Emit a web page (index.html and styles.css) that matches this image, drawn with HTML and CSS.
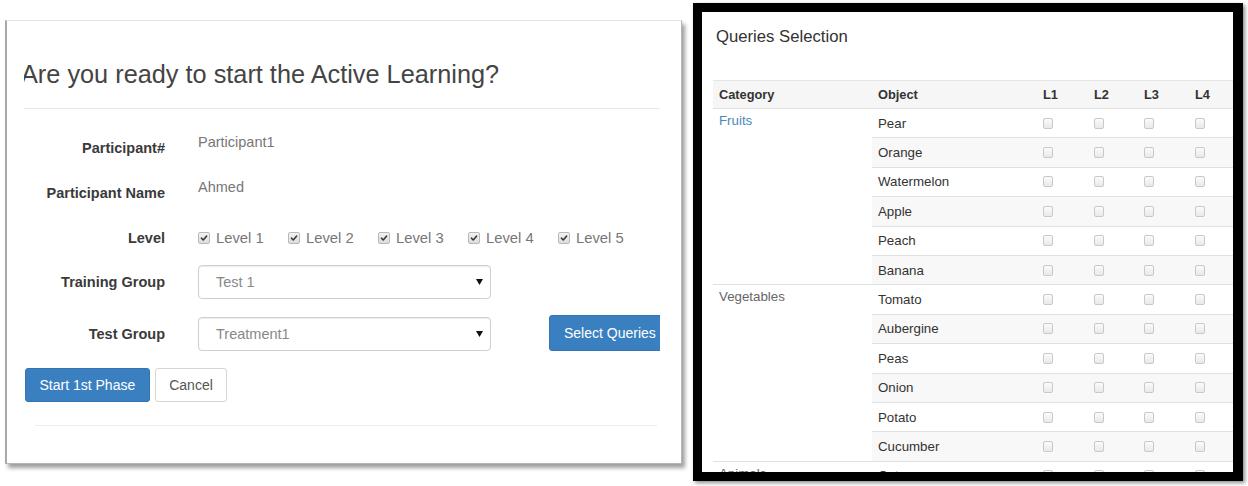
FILE: index.html
```html
<!DOCTYPE html>
<html lang="en">
<head>
<meta charset="utf-8">
<title>Active Learning</title>
<link rel="stylesheet" href="styles.css">
</head>
<body>
<div class="page">
  <section class="modal">
    <div class="modal-clip">
      <h1 class="title">Are you ready to start the Active Learning?</h1>
      <div class="rule"></div>
      <div class="form">
        <div class="row row-1">
          <div class="lbl">Participant#</div>
          <div class="static">Participant1</div>
        </div>
        <div class="row row-2">
          <div class="lbl">Participant Name</div>
          <div class="static">Ahmed</div>
        </div>
        <div class="row row-3">
          <div class="lbl">Level</div>
          <div class="levels">
            <span class="lvl"><span class="chk"><svg viewBox="0 0 12 12" width="12" height="12"><path d="M3 6.2 L5.1 8.4 L9.2 3.6" fill="none" stroke="#333" stroke-width="1.8" stroke-linecap="round" stroke-linejoin="round"/></svg></span>Level 1</span>
            <span class="lvl"><span class="chk"><svg viewBox="0 0 12 12" width="12" height="12"><path d="M3 6.2 L5.1 8.4 L9.2 3.6" fill="none" stroke="#333" stroke-width="1.8" stroke-linecap="round" stroke-linejoin="round"/></svg></span>Level 2</span>
            <span class="lvl"><span class="chk"><svg viewBox="0 0 12 12" width="12" height="12"><path d="M3 6.2 L5.1 8.4 L9.2 3.6" fill="none" stroke="#333" stroke-width="1.8" stroke-linecap="round" stroke-linejoin="round"/></svg></span>Level 3</span>
            <span class="lvl"><span class="chk"><svg viewBox="0 0 12 12" width="12" height="12"><path d="M3 6.2 L5.1 8.4 L9.2 3.6" fill="none" stroke="#333" stroke-width="1.8" stroke-linecap="round" stroke-linejoin="round"/></svg></span>Level 4</span>
            <span class="lvl"><span class="chk"><svg viewBox="0 0 12 12" width="12" height="12"><path d="M3 6.2 L5.1 8.4 L9.2 3.6" fill="none" stroke="#333" stroke-width="1.8" stroke-linecap="round" stroke-linejoin="round"/></svg></span>Level 5</span>
          </div>
        </div>
        <div class="row row-4">
          <div class="lbl">Training Group</div>
          <div class="select"><span>Test 1</span><svg class="caret" viewBox="0 0 7 6" width="7" height="6"><polygon points="0,0 7,0 3.5,6" fill="#111"/></svg></div>
        </div>
        <div class="row row-5">
          <div class="lbl">Test Group</div>
          <div class="select"><span>Treatment1</span><svg class="caret" viewBox="0 0 7 6" width="7" height="6"><polygon points="0,0 7,0 3.5,6" fill="#111"/></svg></div>
          <button class="btn btn-primary btn-queries">Select Queries</button>
        </div>
      </div>
      <div class="actions">
        <button class="btn btn-primary">Start 1st Phase</button>
        <button class="btn btn-default">Cancel</button>
      </div>
      <div class="rule rule-bottom"></div>
    </div>
  </section>

  <section class="queries">
    <div class="queries-inner">
      <h2 class="q-title">Queries Selection</h2>
      <div class="grid">
        <div class="tr head">
          <div class="c">Category</div><div class="c">Object</div><div class="c">L1</div><div class="c">L2</div><div class="c">L3</div><div class="c">L4</div>
        </div>

        <div class="tr">
          <div class="c cat span6"><span class="cat-text fruit">Fruits</span></div>
          <div class="c obj">Pear</div><div class="c"><i class="cb"></i></div><div class="c"><i class="cb"></i></div><div class="c"><i class="cb"></i></div><div class="c"><i class="cb"></i></div>
        </div>
        <div class="tr odd">
          <div class="c obj">Orange</div><div class="c"><i class="cb"></i></div><div class="c"><i class="cb"></i></div><div class="c"><i class="cb"></i></div><div class="c"><i class="cb"></i></div>
        </div>
        <div class="tr">
          <div class="c obj">Watermelon</div><div class="c"><i class="cb"></i></div><div class="c"><i class="cb"></i></div><div class="c"><i class="cb"></i></div><div class="c"><i class="cb"></i></div>
        </div>
        <div class="tr odd">
          <div class="c obj">Apple</div><div class="c"><i class="cb"></i></div><div class="c"><i class="cb"></i></div><div class="c"><i class="cb"></i></div><div class="c"><i class="cb"></i></div>
        </div>
        <div class="tr">
          <div class="c obj">Peach</div><div class="c"><i class="cb"></i></div><div class="c"><i class="cb"></i></div><div class="c"><i class="cb"></i></div><div class="c"><i class="cb"></i></div>
        </div>
        <div class="tr odd">
          <div class="c obj">Banana</div><div class="c"><i class="cb"></i></div><div class="c"><i class="cb"></i></div><div class="c"><i class="cb"></i></div><div class="c"><i class="cb"></i></div>
        </div>

        <div class="tr">
          <div class="c cat span6"><span class="cat-text">Vegetables</span></div>
          <div class="c obj">Tomato</div><div class="c"><i class="cb"></i></div><div class="c"><i class="cb"></i></div><div class="c"><i class="cb"></i></div><div class="c"><i class="cb"></i></div>
        </div>
        <div class="tr odd">
          <div class="c obj">Aubergine</div><div class="c"><i class="cb"></i></div><div class="c"><i class="cb"></i></div><div class="c"><i class="cb"></i></div><div class="c"><i class="cb"></i></div>
        </div>
        <div class="tr">
          <div class="c obj">Peas</div><div class="c"><i class="cb"></i></div><div class="c"><i class="cb"></i></div><div class="c"><i class="cb"></i></div><div class="c"><i class="cb"></i></div>
        </div>
        <div class="tr odd">
          <div class="c obj">Onion</div><div class="c"><i class="cb"></i></div><div class="c"><i class="cb"></i></div><div class="c"><i class="cb"></i></div><div class="c"><i class="cb"></i></div>
        </div>
        <div class="tr">
          <div class="c obj">Potato</div><div class="c"><i class="cb"></i></div><div class="c"><i class="cb"></i></div><div class="c"><i class="cb"></i></div><div class="c"><i class="cb"></i></div>
        </div>
        <div class="tr odd">
          <div class="c obj">Cucumber</div><div class="c"><i class="cb"></i></div><div class="c"><i class="cb"></i></div><div class="c"><i class="cb"></i></div><div class="c"><i class="cb"></i></div>
        </div>

        <div class="tr">
          <div class="c cat span6"><span class="cat-text">Animals</span></div>
          <div class="c obj">Cat</div><div class="c"><i class="cb"></i></div><div class="c"><i class="cb"></i></div><div class="c"><i class="cb"></i></div><div class="c"><i class="cb"></i></div>
        </div>
      </div>
    </div>
  </section>
</div>
</body>
</html>
```

FILE: styles.css
```css
html, body {
  margin: 0;
  padding: 0;
  background: #fff;
}
body {
  font-family: "Liberation Sans", Arial, sans-serif;
  color: #333;
}
.page {
  display: flex;
  align-items: flex-start;
  width: 1248px;
  height: 486px;
  overflow: hidden;
}

/* ---------- left modal ---------- */
.modal {
  box-sizing: border-box;
  margin-left: 5px;
  margin-top: 20px;
  width: 677px;
  height: 444px;
  background: #fff;
  border-top: 1px solid #e4e4e4;
  border-left: 2px solid #a8a8a8;
  border-right: 1px solid #b5b5b5;
  border-bottom: 1px solid #b5b5b5;
  box-shadow: 3px 4px 4px rgba(0, 0, 0, 0.38);
  padding: 36px 21px 0 17px;
}
.modal-clip {
  overflow: hidden;
  width: 636px;
}
.title {
  margin: 0 0 0 -3px;
  font-size: 25.3px;
  line-height: 34px;
  font-weight: normal;
  color: #444;
  white-space: nowrap;
}
.rule {
  height: 1px;
  background: #e8e8e8;
  margin-top: 17px;
}
.form {
  margin-top: 22px;
}
.row {
  display: flex;
  align-items: center;
  height: 34px;
  white-space: nowrap;
}
.row-2, .row-3 { margin-top: 11px; }
.row-4 { margin-top: 10px; }
.row-5 { margin-top: 18px; }
.lbl {
  flex: none;
  width: 141px;
  margin-right: 33px;
  text-align: right;
  font-weight: bold;
  font-size: 14.5px;
  color: #3a3a3a;
}
.static {
  font-size: 14.5px;
  color: #777;
  margin-bottom: 12px;
}
.levels {
  display: flex;
}
.lvl {
  flex: none;
  width: 90px;
  display: flex;
  align-items: center;
  font-size: 14.8px;
  color: #777;
}
.chk {
  box-sizing: border-box;
  width: 12px;
  height: 12px;
  margin-right: 6px;
  border: 1px solid #b9b9b9;
  border-radius: 2px;
  background: linear-gradient(#f2f2f2, #dcdcdc);
  display: flex;
  align-items: center;
  justify-content: center;
}
.chk svg {
  display: block;
  width: 10px;
  height: 10px;
}
.select {
  flex: none;
  box-sizing: border-box;
  width: 293px;
  height: 34px;
  border: 1px solid #cfcfcf;
  border-radius: 4px;
  box-shadow: inset 0 1px 1px rgba(0, 0, 0, 0.075);
  display: flex;
  align-items: center;
  justify-content: space-between;
  padding: 0 7px 0 17px;
  font-size: 14.5px;
  color: #888;
}
.caret {
  display: block;
}
.btn {
  flex: none;
  box-sizing: border-box;
  height: 34px;
  border-radius: 3px;
  font-family: "Liberation Sans", Arial, sans-serif;
  font-size: 14px;
  padding: 0 13.5px;
  border: 1px solid transparent;
  cursor: pointer;
}
.btn-primary {
  background: #3a80c1;
  border-color: #3474b0;
  color: #fff;
}
.btn-default {
  background: #fff;
  border-color: #d6d6d6;
  color: #555;
}
.btn-queries {
  height: 36px;
  width: 130px;
  margin-left: 58px;
  padding-left: 14px;
  text-align: left;
  margin-top: -2px;
}
.actions {
  display: flex;
  gap: 5px;
  margin-top: 17px;
  padding-left: 1px;
}
.rule-bottom {
  margin-top: 23px;
  margin-left: 11px;
  margin-right: 3px;
  background: #ececec;
}

/* ---------- right panel ---------- */
.queries {
  box-sizing: border-box;
  margin-left: 11px;
  margin-top: 3px;
  width: 550px;
  height: 478px;
  border: 9px solid #000;
  border-right-width: 10px;
  background: #fff;
  box-shadow: 2px 2px 4px rgba(0, 0, 0, 0.45);
}
.queries-inner {
  width: 100%;
  height: 100%;
  overflow: hidden;
}
.q-title {
  margin: 13px 0 0 14px;
  font-size: 16.7px;
  line-height: 24px;
  font-weight: normal;
  color: #333;
}
.grid {
  margin: 31px 0 0 11px;
  display: grid;
  grid-template-columns: 159px 165px 51px 50px 51px 51px;
  grid-template-rows: 28px;
  grid-auto-rows: 29.4px;
  width: 527px;
  font-size: 13.3px;
  color: #333;
}
.tr {
  display: contents;
}
.c {
  box-sizing: border-box;
  display: flex;
  align-items: center;
  padding-left: 6px;
  border-top: 1px solid #e0e0e0;
  background: #fff;
  white-space: nowrap;
}
.head .c {
  background: #f6f6f6;
  font-weight: bold;
  font-size: 12.8px;
  border-top-color: #e6e6e6;
}
.tr.odd .c {
  background: #f8f8f8;
}
.obj {
  grid-column: 2;
}
.cat {
  grid-column: 1;
  align-items: flex-start;
}
.span6 {
  grid-row: span 6;
}
.cat-text {
  display: block;
  line-height: 24px;
  color: #666;
}
.cat-text.fruit {
  color: #4a88b5;
}
.cb {
  display: block;
  box-sizing: border-box;
  width: 10px;
  height: 11px;
  border: 1px solid #c9c9c9;
  border-radius: 2px;
  background: linear-gradient(#fbfbfb, #e9e9e9);
}
```
